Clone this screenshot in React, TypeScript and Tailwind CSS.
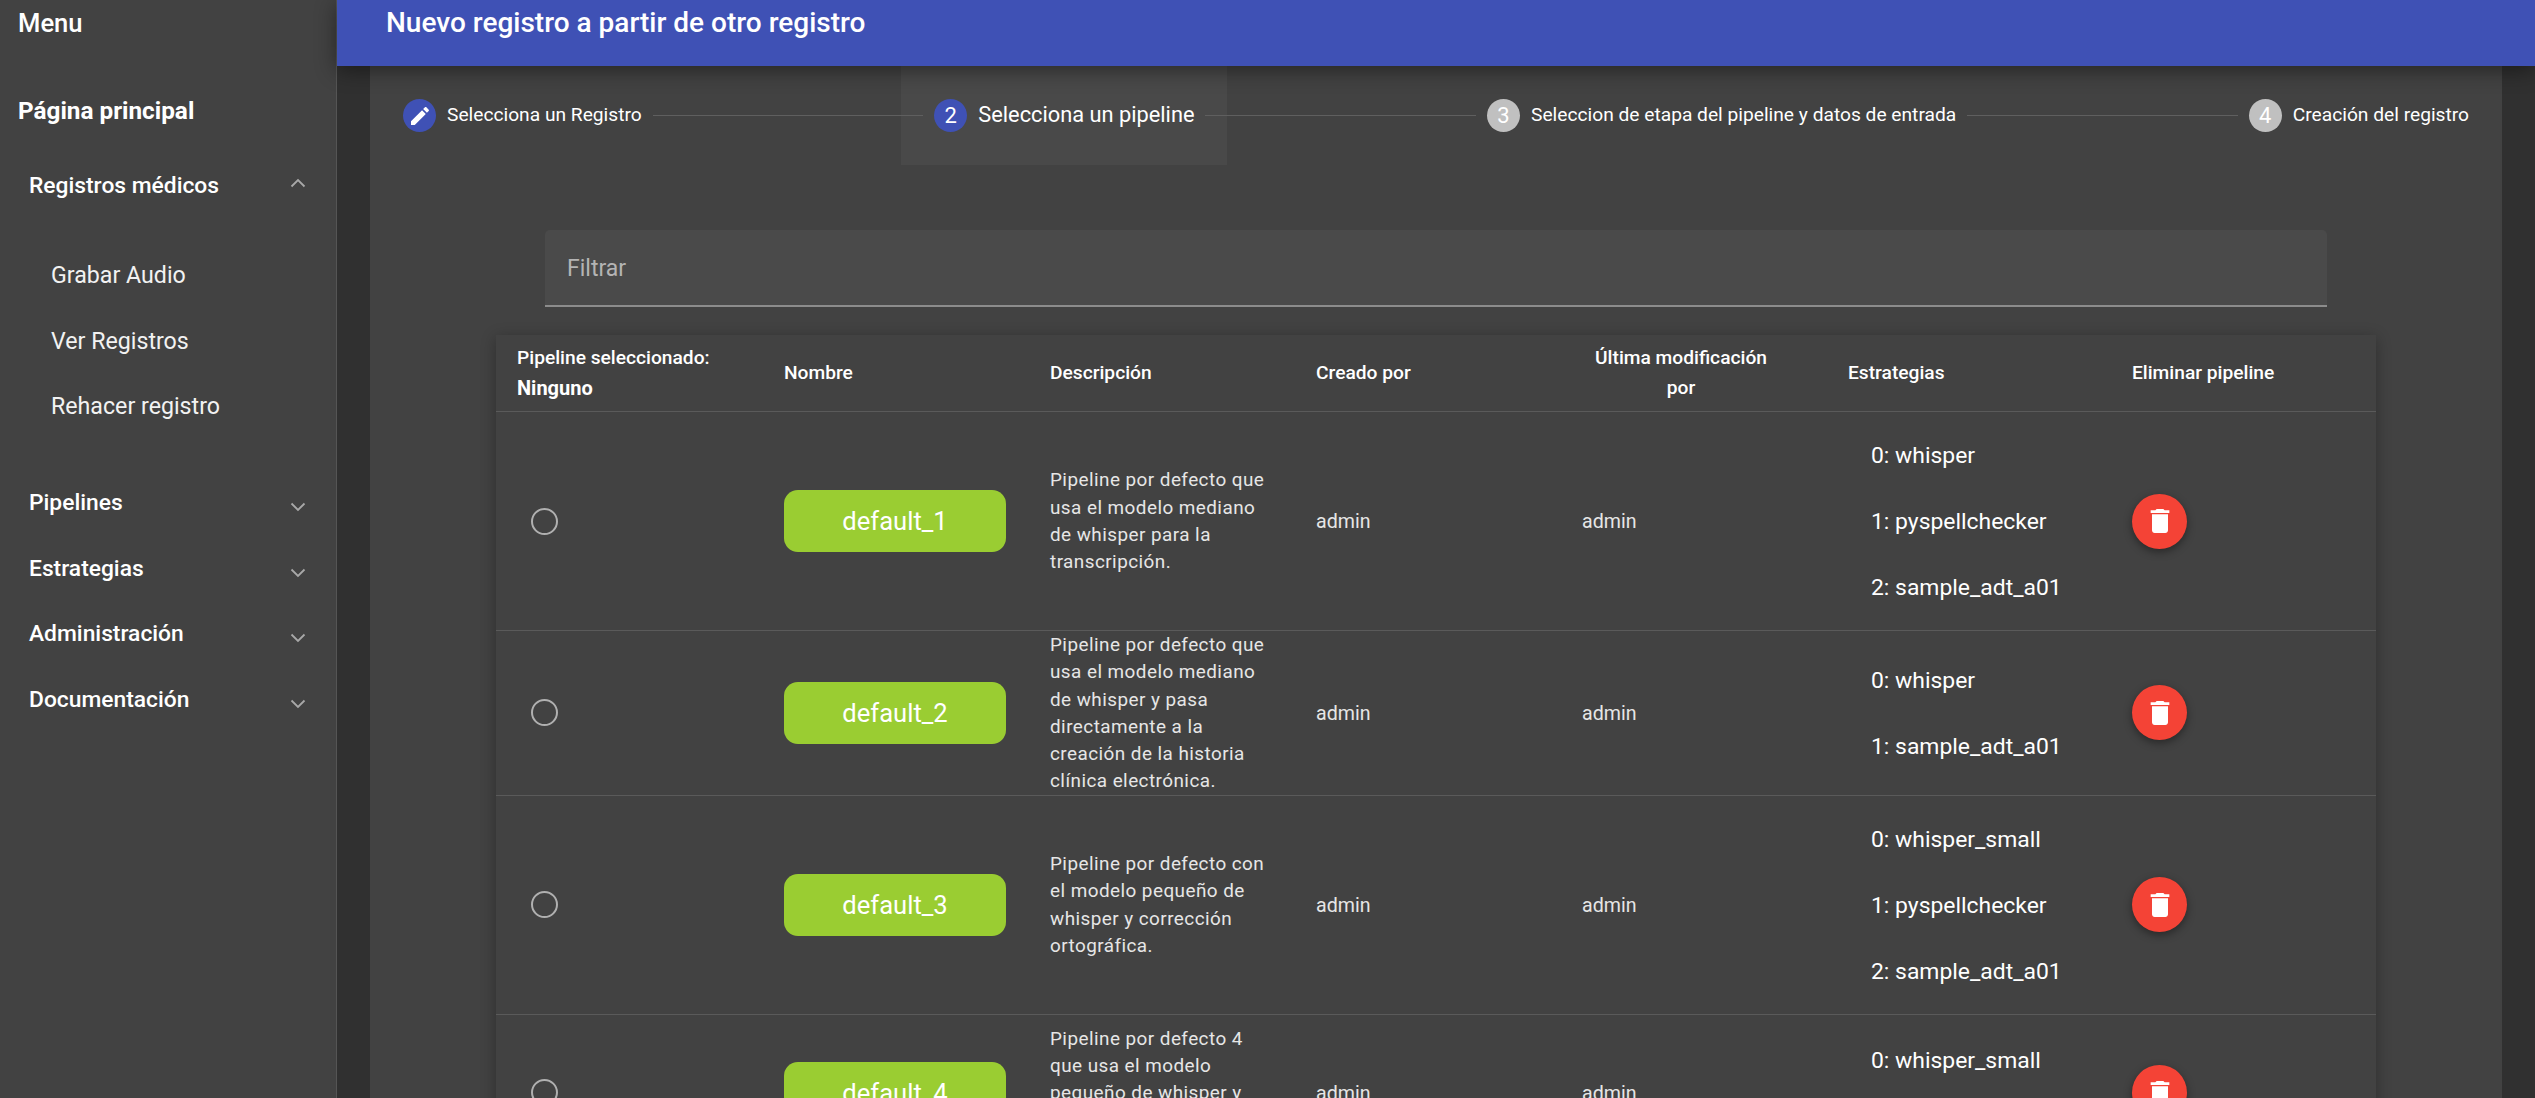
const EDIT_PATH = "M3 17.25V21h3.75L17.81 9.94l-3.75-3.75L3 17.25zM20.71 7.04c.39-.39.39-1.02 0-1.41l-2.34-2.34c-.39-.39-1.02-.39-1.41 0l-1.83 1.83 3.75 3.75 1.83-1.83z";
const DELETE_PATH = "M6 19c0 1.1.9 2 2 2h8c1.1 0 2-.9 2-2V7H6v12zM19 4h-3.5l-1-1h-5l-1 1H5v2h14V4z";

const pipelines = [
  {
    name: "default_1",
    description: ["Pipeline por defecto que", "usa el modelo mediano", "de whisper para la", "transcripción."],
    strategies: ["0: whisper", "1: pyspellchecker", "2: sample_adt_a01"],
    extra: "",
  },
  {
    name: "default_2",
    description: ["Pipeline por defecto que", "usa el modelo mediano", "de whisper y pasa", "directamente a la", "creación de la historia", "clínica electrónica."],
    strategies: ["0: whisper", "1: sample_adt_a01"],
    extra: "",
  },
  {
    name: "default_3",
    description: ["Pipeline por defecto con", "el modelo pequeño de", "whisper y corrección", "ortográfica."],
    strategies: ["0: whisper_small", "1: pyspellchecker", "2: sample_adt_a01"],
    extra: "",
  },
  {
    name: "default_4",
    description: ["Pipeline por defecto 4", "que usa el modelo", "pequeño de whisper y", "pasa directamente a la", "historia clínica."],
    strategies: ["0: whisper_small", "1: sample_adt_a01"],
    extra: "min-h-[157px]",
  },
];

const tableCols = "grid grid-cols-[266px_266px_266px_266px_266px_284px_266px]";

function Chevron({ up = false }: { up?: boolean }) {
  return (
    <svg width="16" height="10" viewBox="0 0 16 10" fill="none" stroke="#a8a8a8" strokeWidth="1.8" className={up ? "rotate-180" : ""}>
      <path d="M1.5 1.5 8 8l6.5-6.5" />
    </svg>
  );
}

function NavGroup({ label }: { label: string }) {
  return (
    <div className="flex h-[65.5px] items-center justify-between pl-[29px] pr-[30px] text-[22.8px] font-medium text-white">
      <span>{label}</span>
      <span className="translate-y-[4px]"><Chevron /></span>
    </div>
  );
}

function Step({ n, label, state }: { n: string; label: string; state: "edit" | "active" | "todo" }) {
  const active = state === "active";
  return (
    <div className={`flex h-full shrink-0 items-center gap-[11px] px-[33px] ${active ? "bg-[#494949]" : ""}`}>
      <div className={`flex h-[33px] w-[33px] items-center justify-center rounded-full text-[22px] text-white ${state === "todo" ? "bg-[#c0c0c0]" : "bg-[#3f51b5]"}`}>
        {state === "edit" ? (
          <svg width="24" height="24" viewBox="0 0 24 24" fill="#fff"><path d={EDIT_PATH} /></svg>
        ) : (
          n
        )}
      </div>
      <span className={`text-white ${active ? "text-[21.8px]" : "text-[19.2px]"}`}>{label}</span>
    </div>
  );
}

function StepLine() {
  return <div className="relative z-10 mx-[-22px] h-px flex-1 bg-[#5f5f5f]" />;
}

export default function App() {
  return (
    <div className="flex h-[1098px] w-[2535px] overflow-hidden bg-[#303030] font-['Roboto',sans-serif] text-white">
      {/* sidebar */}
      <aside className="w-[337px] shrink-0 border-r border-[#555] bg-[#424242]">
        <div className="flex h-[46px] items-center pl-[18px] text-[25.6px] font-medium">Menu</div>
        <div className="flex h-[86px] items-end pb-[3px] pl-[18px] text-[24.3px] font-bold">Página principal</div>
        <div className="mt-[21px] flex h-[66px] items-center justify-between pl-[29px] pr-[30px] text-[22.8px] font-medium">
          <span>Registros médicos</span>
          <span className="-translate-y-[3px]"><Chevron up /></span>
        </div>
        <div className="flex flex-col pt-[24px] pl-[51px] text-[23.2px] text-[#f2f2f2]">
          <div className="flex h-[65.5px] items-center">Grabar Audio</div>
          <div className="flex h-[65.5px] items-center">Ver Registros</div>
          <div className="flex h-[65.5px] items-center">Rehacer registro</div>
        </div>
        <div className="pt-[31px]">
          <NavGroup label="Pipelines" />
          <NavGroup label="Estrategias" />
          <NavGroup label="Administración" />
          <NavGroup label="Documentación" />
        </div>
      </aside>

      {/* main */}
      <main className="flex min-w-0 flex-1 flex-col">
        <header className="relative z-20 h-[66px] shrink-0 bg-[#3f51b5] pl-[49px] pt-[5px] text-[28px] font-medium leading-[36px] shadow-[0_4px_20px_rgba(0,0,0,0.45)]">
          Nuevo registro a partir de otro registro
        </header>
        <div className="min-h-0 flex-1 overflow-hidden pl-[33px] pr-[33px]">
          <section className="h-full bg-[#424242]">
            {/* stepper */}
            <div className="flex h-[99px] items-center">
              <Step n="1" label="Selecciona un Registro" state="edit" />
              <StepLine />
              <Step n="2" label="Selecciona un pipeline" state="active" />
              <StepLine />
              <Step n="3" label="Seleccion de etapa del pipeline y datos de entrada" state="todo" />
              <StepLine />
              <Step n="4" label="Creación del registro" state="todo" />
            </div>

            {/* filter */}
            <div className="ml-[175px] mt-[65px] flex h-[77px] w-[1782px] items-center rounded-t-[5px] border-b-2 border-[#8c8c8c] bg-[#4a4a4a] pl-[22px] pt-[4px] text-[23px] text-[#b4b4b4]">
              Filtrar
            </div>

            {/* table */}
            <div className="ml-[126px] mt-[28px] w-[1880px] bg-[#424242] shadow-[0_3px_14px_rgba(0,0,0,0.3)]">
              <div className={`${tableCols} h-[77px] items-center border-b border-[#5a5a5a] text-[19.2px] font-medium`}>
                <div className="pl-[21px] leading-[30px]">
                  <div>Pipeline seleccionado:</div>
                  <div className="text-[20px] font-bold">Ninguno</div>
                </div>
                <div className="pl-[22px]">Nombre</div>
                <div className="pl-[22px]">Descripción</div>
                <div className="pl-[22px]">Creado por</div>
                <div className="ml-[22px] w-[198px] text-center leading-[30px]">Última modificación por</div>
                <div className="pl-[22px]">Estrategias</div>
                <div className="pl-[22px]">Eliminar pipeline</div>
              </div>

              {pipelines.map((p) => (
                <div key={p.name} className={`${tableCols} items-center border-b border-[#5a5a5a] ${p.extra}`}>
                  <div className="pl-[35px]">
                    <div className="h-[27px] w-[27px] rounded-full border-2 border-[#b0b0b0]" />
                  </div>
                  <div className="pl-[22px]">
                    <div className="flex h-[62px] w-[222px] items-center justify-center rounded-[14px] bg-[#9acd32] text-[25.6px]">
                      {p.name}
                    </div>
                  </div>
                  <div className="pl-[22px] text-[18.9px] leading-[27.3px] tracking-[0.45px] text-[#e6e6e6]">
                    {p.description.map((line) => (
                      <div key={line}>{line}</div>
                    ))}
                  </div>
                  <div className="pl-[22px] pt-[2px] text-[19.6px] text-[#e6e6e6]">admin</div>
                  <div className="pl-[22px] pt-[2px] text-[19.6px] text-[#e6e6e6]">admin</div>
                  <div className="py-[10px] pl-[45px] text-[22.9px]">
                    {p.strategies.map((s) => (
                      <div key={s} className="flex h-[66px] items-center pt-[3px]">{s}</div>
                    ))}
                  </div>
                  <div className="pl-[22px]">
                    <div className="flex h-[55px] w-[55px] items-center justify-center rounded-full bg-[#f44336] shadow-[0_3px_8px_rgba(0,0,0,0.4)]">
                      <svg width="32" height="32" viewBox="0 0 24 24" fill="#fff"><path d={DELETE_PATH} /></svg>
                    </div>
                  </div>
                </div>
              ))}
            </div>
          </section>
        </div>
      </main>
    </div>
  );
}
